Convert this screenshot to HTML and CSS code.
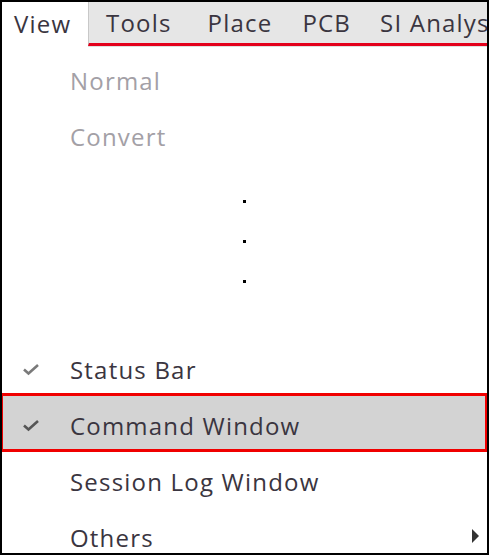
FILE: index.html
```html
<!DOCTYPE html>
<html>
<head>
<meta charset="utf-8">
<link rel="stylesheet" href="styles.css">
</head>
<body>
<div class="frame">
  <div class="menubar">
    <div class="tab active">View</div>
    <div class="bar">
      <span class="mi mi-tools">Tools</span>
      <span class="mi mi-place">Place</span>
      <span class="mi mi-pcb">PCB</span>
      <span class="mi mi-si">SI Analysis</span>
    </div>
  </div>
  <div class="menu">
    <div class="row disabled"><span class="check"></span><span class="label">Normal</span></div>
    <div class="row disabled"><span class="check"></span><span class="label">Convert</span></div>
    <div class="dots"><i></i><i></i><i></i></div>
    <div class="row"><span class="check light"><svg width="18" height="13" viewBox="0 0 18 13"><path d="M2 6.5 L6.5 10.5 L16 2" fill="none" stroke="currentColor" stroke-width="2.6"/></svg></span><span class="label">Status Bar</span></div>
    <div class="row selected"><span class="hl"></span><span class="check"><svg width="18" height="13" viewBox="0 0 18 13"><path d="M2 6.5 L6.5 10.5 L16 2" fill="none" stroke="currentColor" stroke-width="2.6"/></svg></span><span class="label">Command Window</span></div>
    <div class="row"><span class="check"></span><span class="label">Session Log Window</span></div>
    <div class="row"><span class="check"></span><span class="label">Others</span><span class="arrow"></span></div>
  </div>
</div>
</body>
</html>
```
FILE: styles.css
```css
html, body {
  margin: 0;
  padding: 0;
  background: #fff;
}
.frame {
  width: 489px;
  height: 555px;
  box-sizing: border-box;
  border: 2px solid #000;
  overflow: hidden;
  font-family: "Open Sans", "Noto Sans", sans-serif;
  color: #3a3540;
  background: #fff;
  letter-spacing: 1.2px;
}
.menubar {
  display: flex;
  height: 44px;
  font-size: 24px;
}
.tab.active {
  width: 86px;
  padding-left: 12px;
  box-sizing: border-box;
  line-height: 44px;
  background: #fff;
}
.bar {
  flex: 1;
  display: flex;
  background: #e6e6e6;
  border-left: 1px solid #c8c8c8;
  border-bottom: 3px solid #e3001b;
  box-shadow: 0 1px 0 #e0e0e0;
  height: 41px;
  line-height: 42px;
  white-space: nowrap;
  overflow: hidden;
}
.mi-tools { margin-left: 17px; }
.mi-place { margin-left: 36px; }
.mi-pcb { margin-left: 30px; }
.mi-si { margin-left: 29px; }
.menu {
  padding-top: 6px;
  font-size: 24px;
}
.row {
  position: relative;
  display: flex;
  align-items: center;
  height: 56px;
}
.row.disabled { color: #a3a0a6; }
.check {
  position: relative;
  width: 68px;
  display: flex;
  justify-content: flex-start;
  padding-left: 20px;
  box-sizing: border-box;
  color: #555;
}
.label { position: relative; }
.check.light { color: #7a7a7a; }
.check svg { display: block; }
.hl {
  position: absolute;
  left: -2px;
  right: -1px;
  top: -4px;
  bottom: 1px;
  border: 3px solid #f00000;
  background: #d3d3d3;
}
.dots {
  height: 177px;
  display: flex;
  flex-direction: column;
  align-items: flex-start;
  padding-left: 241px;
  padding-top: 36px;
  box-sizing: border-box;
  gap: 37px;
}
.dots i {
  display: block;
  width: 3px;
  height: 3px;
  background: #000;
}
.arrow {
  position: absolute;
  right: 8px;
  top: 20px;
  width: 0;
  height: 0;
  border-top: 7px solid transparent;
  border-bottom: 7px solid transparent;
  border-left: 7px solid #333;
}
```
